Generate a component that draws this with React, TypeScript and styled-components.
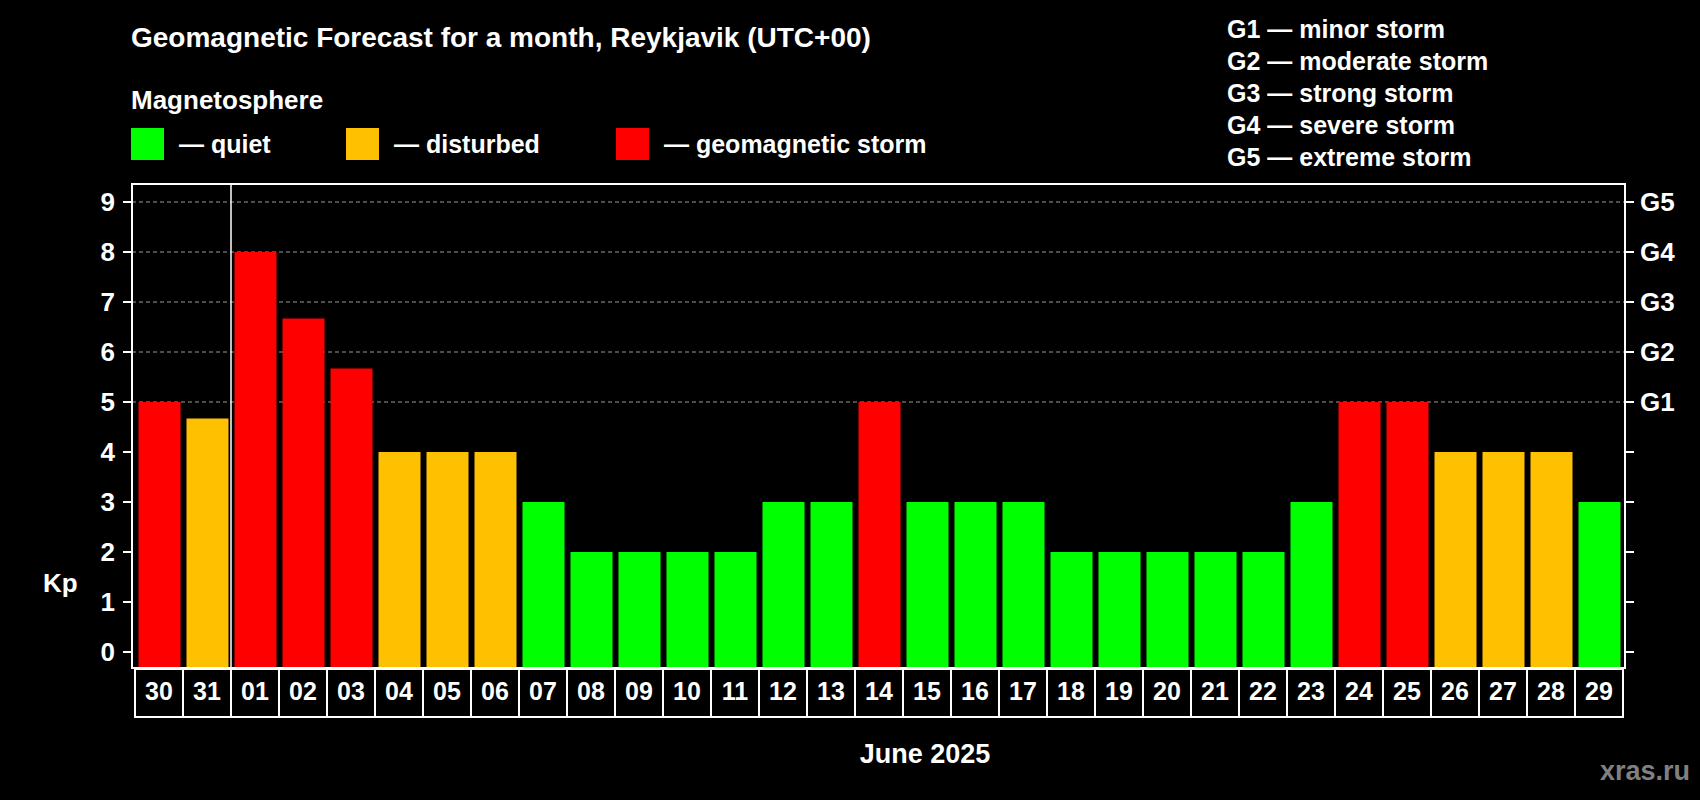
import React from "react";
import styled, { createGlobalStyle } from "styled-components";

const Global = createGlobalStyle`
  html, body { margin: 0; padding: 0; background: #000; }
  body { font-family: "Liberation Sans", Arial, sans-serif; }
`;

const Page = styled.div`
  width: 1700px;
  height: 800px;
  background: #000;
  color: #fff;
  display: flex;
  flex-direction: column;
  overflow: hidden;
`;

const Header = styled.div`
  height: 183px;
  display: flex;
  justify-content: space-between;
  box-sizing: border-box;
`;

const LeftCol = styled.div`
  padding-left: 131px;
  padding-top: 22px;
  display: flex;
  flex-direction: column;
`;

const Title = styled.div`
  font-size: 28px;
  font-weight: bold;
  line-height: 32px;
  height: 32px;
`;

const Sub = styled.div`
  font-size: 26px;
  font-weight: bold;
  line-height: 32px;
  margin-top: 30px;
`;

const Legend = styled.div`
  display: flex;
  align-items: center;
  margin-top: 12px;
  height: 32px;
`;

const LegendItem = styled.div<{ $w: number }>`
  display: flex;
  align-items: center;
  width: ${(p) => p.$w}px;
  font-size: 25px;
  font-weight: bold;
`;

const Swatch = styled.span<{ $c: string }>`
  width: 33px;
  height: 32px;
  background: ${(p) => p.$c};
  margin-right: 15px;
`;

const RightCol = styled.div`
  width: 473px;
  padding-top: 13px;
  display: flex;
  flex-direction: column;
`;

const GRow = styled.div`
  font-size: 25px;
  font-weight: bold;
  line-height: 32px;
`;

const RED = "#ff0000";
const YEL = "#ffc000";
const GRN = "#00ff00";

const days = [
  ["30", 5], ["31", 4.67], ["01", 8], ["02", 6.67], ["03", 5.67], ["04", 4], ["05", 4], ["06", 4],
  ["07", 3], ["08", 2], ["09", 2], ["10", 2], ["11", 2], ["12", 3], ["13", 3], ["14", 5],
  ["15", 3], ["16", 3], ["17", 3], ["18", 2], ["19", 2], ["20", 2], ["21", 2], ["22", 2],
  ["23", 3], ["24", 5], ["25", 5], ["26", 4], ["27", 4], ["28", 4], ["29", 3],
] as [string, number][];

const color = (v: number) => (v >= 5 ? RED : v >= 4 ? YEL : GRN);

const OY = 183;
const zeroY = 652 - OY;
const bottomY = 668 - OY;
const topY = 0;
const left = 132;
const right = 1625;
const unit = 50;

function Chart() {
  const font = { fontFamily: "'Liberation Sans', Arial, sans-serif", fontWeight: "bold" as const };
  return (
    <svg width={1700} height={617} style={{ display: "block" }}>
      {[5, 6, 7, 8, 9].map((k) => (
        <line key={k} x1={left} x2={right} y1={zeroY - k * unit} y2={zeroY - k * unit}
          stroke="#999" strokeWidth={1} strokeDasharray="4 3" />
      ))}
      {days.map(([d, v], i) => {
        const x = 138.5 + i * 48;
        const h = v * unit + (bottomY - zeroY);
        return <rect key={d} x={x} y={bottomY - h} width={42} height={h} fill={color(v)} />;
      })}
      <rect x={left} y={topY + 1} width={right - left} height={bottomY - 1} fill="none" stroke="#fff" strokeWidth={2} />
      <line x1={231} x2={231} y1={topY} y2={bottomY} stroke="#fff" strokeWidth={1.5} />
      {Array.from({ length: 10 }, (_, k) => (
        <g key={k}>
          <line x1={left - 9} x2={left} y1={zeroY - k * unit} y2={zeroY - k * unit} stroke="#fff" strokeWidth={2} />
          <line x1={right} x2={right + 9} y1={zeroY - k * unit} y2={zeroY - k * unit} stroke="#fff" strokeWidth={2} />
          <text x={115} y={zeroY - k * unit + 9} textAnchor="end" fill="#fff" fontSize={26} {...font}>{k}</text>
        </g>
      ))}
      {[1, 2, 3, 4, 5].map((g) => (
        <text key={g} x={1640} y={zeroY - (g + 4) * unit + 9} fill="#fff" fontSize={26} {...font}>G{g}</text>
      ))}
      <text x={43} y={409} fill="#fff" fontSize={26} {...font}>Kp</text>
      {days.map(([d], i) => {
        const x = 135 + i * 48;
        return (
          <g key={d}>
            <rect x={x} y={bottomY + 1} width={48} height={48} fill="none" stroke="#fff" strokeWidth={2} />
            <text x={x + 24} y={700 - OY} textAnchor="middle" fill="#fff" fontSize={25} {...font}>{d}</text>
          </g>
        );
      })}
      <text x={925} y={763 - OY} textAnchor="middle" fill="#fff" fontSize={27} {...font}>June 2025</text>
      <text x={1690} y={780 - OY} textAnchor="end" fill="#808080" fontSize={27} {...font}>xras.ru</text>
    </svg>
  );
}

export default function App() {
  return (
    <>
      <Global />
      <Page>
        <Header>
          <LeftCol>
            <Title>Geomagnetic Forecast for a month, Reykjavik (UTC+00)</Title>
            <Sub>Magnetosphere</Sub>
            <Legend>
              <LegendItem $w={215}><Swatch $c={GRN} />— quiet</LegendItem>
              <LegendItem $w={270}><Swatch $c={YEL} />— disturbed</LegendItem>
              <LegendItem $w={400}><Swatch $c={RED} />— geomagnetic storm</LegendItem>
            </Legend>
          </LeftCol>
          <RightCol>
            <GRow>G1 — minor storm</GRow>
            <GRow>G2 — moderate storm</GRow>
            <GRow>G3 — strong storm</GRow>
            <GRow>G4 — severe storm</GRow>
            <GRow>G5 — extreme storm</GRow>
          </RightCol>
        </Header>
        <Chart />
      </Page>
    </>
  );
}
